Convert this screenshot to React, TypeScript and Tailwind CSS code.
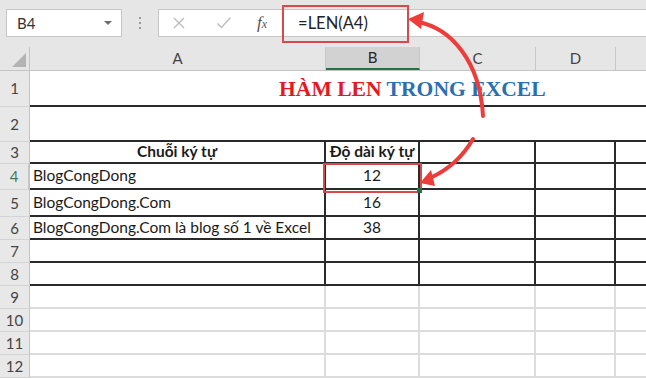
const cellFont = { fontFamily: 'Lato, "Noto Sans", sans-serif' };

// column widths (right border included)
const COLS = [
  { key: 'A', w: 'w-[296px]' },
  { key: 'B', w: 'w-[94px]' },
  { key: 'C', w: 'w-[116px]' },
  { key: 'D', w: 'w-[80px]' },
];

interface RowDef {
  n: number;
  h: string;
  a?: string;
  b?: string;
  bold?: boolean;
}

const tableRows: RowDef[] = [
  { n: 3, h: 'h-[22px]', a: 'Chuỗi ký tự', b: 'Độ dài ký tự', bold: true },
  { n: 4, h: 'h-[26px]', a: 'BlogCongDong', b: '12' },
  { n: 5, h: 'h-[27px]', a: 'BlogCongDong.Com', b: '16' },
  { n: 6, h: 'h-[23px]', a: 'BlogCongDong.Com là blog số 1 về Excel', b: '38' },
  { n: 7, h: 'h-[23px]' },
  { n: 8, h: 'h-[23px]' },
];

const emptyRows = [9, 10, 11, 12];

function RowHeader({ n, active }: { n: number; active?: boolean }) {
  return (
    <div
      className={`w-[30px] shrink-0 flex items-center justify-center bg-[#e8e8e8] border-r border-b border-b-[#d4d4d4] border-r-[#c4c4c4] text-[15px] ${
        active ? 'text-[#3f7a57] bg-[#dedede] border-r-2 border-r-[#217346]' : 'text-[#444]'
      }`}
    >
      {n}
    </div>
  );
}

export default function App() {
  return (
    <div className="relative w-[646px] h-[379px] overflow-hidden bg-white" style={cellFont}>
      {/* Toolbar: name box + formula bar */}
      <div className="h-[47px] bg-[#e6e6e6] flex items-start pt-[9px]">
        <div className="ml-[6px] w-[116px] h-[28px] bg-white border border-[#c6c6c6] flex items-center justify-between pl-[10px] pr-[8px]">
          <span className="text-[15px] text-[#333]">B4</span>
          <svg width="10" height="6" viewBox="0 0 10 6">
            <path d="M1 1 L9 1 L5 5 Z" fill="#707070" />
          </svg>
        </div>
        <div className="w-[36px] h-[28px] flex flex-col items-center justify-center gap-[3px]">
          <span className="w-[2px] h-[2px] bg-[#9a9a9a]" />
          <span className="w-[2px] h-[2px] bg-[#9a9a9a]" />
          <span className="w-[2px] h-[2px] bg-[#9a9a9a]" />
        </div>
        <div className="flex-1 h-[28px] bg-white border border-[#c6c6c6] border-r-0 flex items-center">
          <svg className="ml-[13px]" width="14" height="14" viewBox="0 0 14 14">
            <path d="M2 2 L12 12 M12 2 L2 12" stroke="#bdbdbd" strokeWidth="1.4" />
          </svg>
          <svg className="ml-[30px]" width="16" height="14" viewBox="0 0 16 14">
            <path d="M1.5 7.5 L5.5 11.5 L14.5 1.5" stroke="#bdbdbd" strokeWidth="1.4" fill="none" />
          </svg>
          <span
            className="ml-[25px] text-[17px] italic text-[#555]"
            style={{ fontFamily: '"Liberation Serif", serif' }}
          >
            f<span className="text-[12px]">x</span>
          </span>
          <span className="ml-[31px] text-[16.5px] text-[#222]">=LEN(A4)</span>
        </div>
      </div>

      {/* Column headers */}
      <div className="h-[24px] flex bg-[#e6e6e6] border-b border-[#c4c4c4]">
        <div className="w-[30px] shrink-0 border-r border-[#c4c4c4] relative">
          <svg className="absolute right-[3px] bottom-[3px]" width="14" height="14" viewBox="0 0 14 14">
            <path d="M14 0 L14 14 L0 14 Z" fill="#b3b3b3" />
          </svg>
        </div>
        {COLS.map(c => (
          <div
            key={c.key}
            className={`${c.w} shrink-0 flex items-center justify-center text-[15px] text-[#444] border-r border-[#c8c8c8] ${
              c.key === 'B' ? 'bg-[#d2d2d2] text-[#262626] border-b-2 border-b-[#217346]' : ''
            }`}
          >
            {c.key}
          </div>
        ))}
        <div className="flex-1" />
      </div>

      {/* Row 1: title (merged) */}
      <div className="h-[36px] flex">
        <RowHeader n={1} />
        <div className="flex-1 border-b-2 border-[#2a2a2a] flex items-center pl-[249px] pt-[3px]">
          <span
            className="text-[21.6px] font-bold leading-none whitespace-nowrap"
            style={{ fontFamily: '"Liberation Serif", "Times New Roman", serif' }}
          >
            <span className="text-[#e3191f]">HÀM LEN </span>
            <span className="text-[#2a6fb0]">TRONG EXCEL</span>
          </span>
        </div>
      </div>

      {/* Row 2: empty merged */}
      <div className="h-[35px] flex">
        <RowHeader n={2} />
        <div className="flex-1 border-b-2 border-[#2a2a2a]" />
      </div>

      {/* Rows 3-8: bordered table */}
      {tableRows.map(r => (
        <div key={r.n} className={`${r.h} flex`}>
          <RowHeader n={r.n} active={r.n === 4} />
          <div
            className={`w-[296px] shrink-0 border-r-2 border-b-2 border-[#2a2a2a] flex items-center text-[15.5px] text-[#1a1a1a] whitespace-nowrap ${
              r.bold ? 'justify-center font-bold' : 'pl-[3px]'
            }`}
          >
            {r.a}
          </div>
          <div
            className={`w-[94px] shrink-0 border-r-2 border-b-2 border-[#2a2a2a] flex items-center justify-center text-[15.5px] text-[#1a1a1a] whitespace-nowrap ${
              r.bold ? 'font-bold' : ''
            }`}
          >
            {r.b}
          </div>
          <div className="w-[116px] shrink-0 border-r-2 border-b-2 border-[#2a2a2a]" />
          <div className="w-[80px] shrink-0 border-r-2 border-b-2 border-[#2a2a2a]" />
          <div className="flex-1 border-b-2 border-[#2a2a2a]" />
        </div>
      ))}

      {/* Rows 9-12: plain grid */}
      {emptyRows.map(n => (
        <div key={n} className="h-[23px] flex">
          <RowHeader n={n} />
          {COLS.map(c => (
            <div key={c.key} className={`${c.w} shrink-0 border-r-2 border-b-2 border-[#dcdcdc]`} />
          ))}
          <div className="flex-1 border-b-2 border-[#dcdcdc]" />
        </div>
      ))}

      {/* Annotation: red box around the formula */}
      <div className="absolute left-[282px] top-[5px] w-[127px] h-[38px] border-2 border-[#d9484a]" />

      {/* Annotation: selected cell B4 */}
      <div className="absolute left-[323px] top-[163px] w-[99px] h-[30px] border-2 border-[#d9484a]" />
      <div className="absolute left-[417px] top-[188px] w-[5px] h-[5px] bg-[#217346]" />

      {/* Curved arrows */}
      <svg className="absolute inset-0 pointer-events-none" width="646" height="379" viewBox="0 0 646 379">
        <path
          d="M418 22 C 450 28, 480 60, 483 116"
          stroke="#ec3d3a"
          strokeWidth="4"
          fill="none"
          strokeLinecap="round"
        />
        <path d="M408 19 L424 12 L421 29 Z" fill="#ec3d3a" />
        <path
          d="M473 139 C 462 158, 448 170, 430 178"
          stroke="#ec3d3a"
          strokeWidth="4"
          fill="none"
          strokeLinecap="round"
        />
        <path d="M420 183 L431 170 L435 186 Z" fill="#ec3d3a" />
      </svg>
    </div>
  );
}
